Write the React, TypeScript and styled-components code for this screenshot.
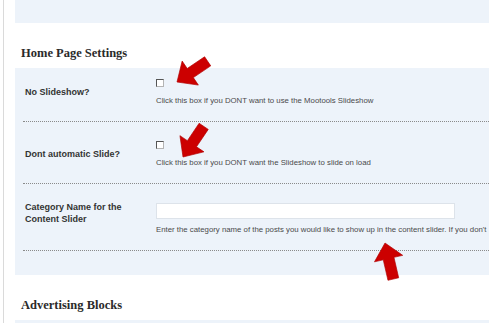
import React from 'react';
import styled, { createGlobalStyle } from 'styled-components';

const GlobalStyle = createGlobalStyle`
  html, body {
    margin: 0;
    padding: 0;
    background: #ffffff;
    overflow: hidden;
  }
`;

const Page = styled.div`
  position: relative;
  width: 640px;
  height: 323px;
  margin-left: 3px;
  padding-left: 11px;
  border-left: 1px solid #dadada;
  font-family: 'Liberation Sans', Arial, sans-serif;
`;

const TopPanel = styled.div`
  height: 23px;
  background: #edf3fa;
`;

const SectionTitle = styled.h3`
  box-sizing: border-box;
  height: 45px;
  margin: 0;
  padding: 23px 6px 0;
  font-family: 'Liberation Serif', 'DejaVu Serif', Georgia, serif;
  font-size: 12.5px;
  line-height: 14px;
  font-weight: 700;
  color: #2a2a2a;
`;

const Panel = styled.div`
  background: #edf3fa;
  padding-bottom: 24px;
`;

const Row = styled.div`
  display: flex;
  align-items: center;
  padding: 19px 0 17px 2px;
  margin-left: 8px;
  border-bottom: 1px dotted #8a8a8a;

  &:first-child {
    padding-top: 11px;
  }
`;

const Label = styled.div<{ $raise?: boolean }>`
  width: 131px;
  flex-shrink: 0;
  font-size: 9px;
  line-height: 12px;
  font-weight: 700;
  color: #333333;
  margin-top: ${p => (p.$raise ? '-10px' : '0')};
`;

const Field = styled.div`
  display: flex;
  flex-direction: column;
  align-items: flex-start;
`;

const Check = styled.input`
  appearance: none;
  box-sizing: border-box;
  width: 8px;
  height: 8px;
  margin: 0 0 11px;
  background: #ffffff;
  border: 1px solid #b4b4b4;
  border-top-color: #555555;
  border-left-color: #555555;
`;

const TextInput = styled.input`
  box-sizing: border-box;
  width: 299px;
  height: 16px;
  margin: 0 0 8px;
  padding: 0 4px;
  background: #ffffff;
  border: 1px solid #dde3ea;
`;

const Help = styled.span`
  font-size: 7.8px;
  line-height: 6px;
  color: #4a4a4a;
  white-space: nowrap;
`;

const BottomPanel = styled.div`
  height: 10px;
  background: #edf3fa;
`;

const Overlay = styled.svg`
  position: absolute;
  left: -4px;
  top: 0;
  pointer-events: none;
`;

const arrowShape = '0,0 14.5,16 5.5,16 5.5,37 -5.5,37 -5.5,16 -14.5,16';

const arrows = [
  { x: 177, y: 82, angle: -124 },
  { x: 183, y: 157, angle: -146 },
  { x: 385, y: 243, angle: -13 },
];

const App: React.FC = () => {
  return (
    <>
      <GlobalStyle />
      <Page>
        <TopPanel />
        <SectionTitle>Home Page Settings</SectionTitle>
        <Panel>
          <Row>
            <Label>No Slideshow?</Label>
            <Field>
              <Check type="checkbox" />
              <Help>Click this box if you DONT want to use the Mootools Slideshow</Help>
            </Field>
          </Row>
          <Row>
            <Label>Dont automatic Slide?</Label>
            <Field>
              <Check type="checkbox" />
              <Help>Click this box if you DONT want the Slideshow to slide on load</Help>
            </Field>
          </Row>
          <Row>
            <Label $raise>
              Category Name for the
              <br />
              Content Slider
            </Label>
            <Field>
              <TextInput type="text" />
              <Help>
                Enter the category name of the posts you would like to show up in the content slider. If you don't
              </Help>
            </Field>
          </Row>
        </Panel>
        <SectionTitle>Advertising Blocks</SectionTitle>
        <BottomPanel />

        <Overlay width="489" height="323" viewBox="0 0 489 323">
          {arrows.map((a, i) => (
            <polygon
              key={i}
              points={arrowShape}
              fill="#cc0000"
              stroke="#b00000"
              strokeWidth="0.6"
              strokeLinejoin="round"
              transform={`translate(${a.x} ${a.y}) rotate(${a.angle})`}
            />
          ))}
        </Overlay>
      </Page>
    </>
  );
};

export default App;
